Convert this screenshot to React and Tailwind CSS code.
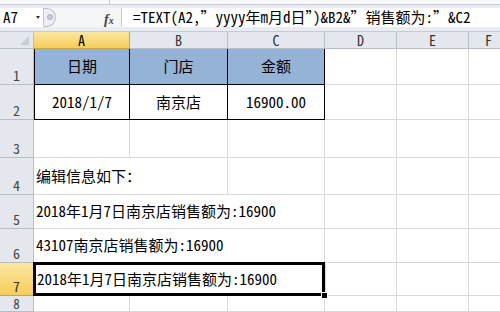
const cjk = '"Noto Sans Mono CJK SC", "Liberation Mono", "Noto Sans CJK SC", monospace'

const cols = [
  { key: 'A', w: 'w-[96px]' },
  { key: 'B', w: 'w-[98px]' },
  { key: 'C', w: 'w-[97px]' },
  { key: 'D', w: 'w-[72px]' },
  { key: 'E', w: 'w-[72px]' },
  { key: 'F', w: 'w-[40px]' },
]

function RowHead({ n, h, active, top }) {
  return (
    <div
      className={
        'w-[34px] shrink-0 flex justify-center border-r border-b leading-none ' +
        h +
        (top ? ' items-start pt-[1px] text-[13px]' : ' items-end pb-[2px] text-[14px]') +
        (active
          ? ' bg-gradient-to-b from-[#fbe7a0] to-[#f6cd57] border-[#c9a44a] text-[#333]'
          : ' bg-[#e4e8ee] border-[#b9bec6] text-[#444]')
      }
    >
      {n}
    </div>
  )
}

function Empty({ w, extra = '' }) {
  return <div className={'shrink-0 h-full border-r border-b border-[#d9d9d9] ' + w + ' ' + extra} />
}

function Line({ n, h, span, text }) {
  // text that spills over a few empty cells
  const widths = { 1: 'w-[96px]', 2: 'w-[194px]', 3: 'w-[291px]' }
  const rest = cols.slice(span)
  return (
    <div className={'flex ' + h}>
      <RowHead n={n} h="h-full" />
      <div className={'shrink-0 h-full flex items-center pl-[2px] whitespace-nowrap border-r border-b border-[#d9d9d9] text-[15px] ' + widths[span]}>
        {text}
      </div>
      {rest.map(c => <Empty key={c.key} w={c.w} />)}
    </div>
  )
}

export default function App() {
  return (
    <div className="w-[500px] h-[312px] overflow-hidden bg-white text-black" style={{ fontFamily: cjk }}>
      {/* ribbon remnant */}
      <div className="h-[5px] flex border-b border-[#c5cbd3] bg-[#f7f8fa]">
        <div className="w-[110px] border-r border-[#c5cbd3]" />
      </div>

      {/* formula bar */}
      <div className="h-[26px] bg-[#e9edf2] flex items-center pt-[2px] pb-[4px]">
        <div className="h-[19px] w-[44px] bg-white flex items-center pl-[3px] text-[15px] relative border-r border-[#c5cbd3]">
          A7
          <span className="absolute left-[36px] top-[8px] w-0 h-0 border-l-[2px] border-r-[2px] border-t-[3px] border-l-transparent border-r-transparent border-t-[#333]" />
        </div>
        <div className="h-[19px] w-[77px] bg-[#f4f6f8] flex items-center relative">
          <div className="w-[12px] h-[19px] rounded-r-full border border-l-0 border-[#b8bec6] bg-[#eceff3] flex items-center justify-center">
            <span className="w-[6px] h-[6px] rounded-full bg-[#c9ced5] border border-[#aab0b8]" />
          </div>
          <span
            className="absolute left-[60px] top-[1px] text-[14px] italic font-bold text-[#444]"
            style={{ fontFamily: '"Liberation Serif", serif' }}
          >
            f<span className="text-[10px]">x</span>
          </span>
        </div>
        <div className="h-[19px] flex-1 bg-white border-l border-[#c5cbd3] flex items-center pl-[11px] text-[15px] whitespace-nowrap">
          =TEXT(A2,”yyyy年m月d日”)&amp;B2&amp;”销售额为:”&amp;C2
        </div>
      </div>

      {/* column headers */}
      <div className="h-[18px] flex border-t border-[#c5cbd3]">
        <div className="w-[34px] shrink-0 bg-[#e4e8ee] border-r border-b border-[#b9bec6] relative">
          <span className="absolute right-[4px] bottom-[3px] w-0 h-0 border-b-[9px] border-l-[9px] border-l-transparent border-b-[#c8cdd4]" />
        </div>
        {cols.map(c => (
          <div
            key={c.key}
            className={
              'shrink-0 flex items-center justify-center border-r border-b text-[14px] ' +
              c.w +
              (c.key === 'A'
                ? ' bg-gradient-to-b from-[#fbe7a0] to-[#f6cd57] border-[#c9a44a]'
                : ' bg-[#e4e8ee] border-[#b9bec6] text-[#333]')
            }
          >
            {c.key}
          </div>
        ))}
      </div>

      {/* row 1 */}
      <div className="flex h-[36px]">
        <RowHead n="1" h="h-full" />
        {['日期', '门店', '金额'].map((t, i) => (
          <div
            key={t}
            className={'shrink-0 h-full bg-[#95b3d7] border-r border-b border-black flex items-center justify-center text-[15px] ' + cols[i].w + (i === 0 ? ' border-l border-l-black' : '')}
          >
            {t}
          </div>
        ))}
        {cols.slice(3).map(c => <Empty key={c.key} w={c.w} />)}
      </div>

      {/* row 2 */}
      <div className="flex h-[35px]">
        <RowHead n="2" h="h-full" />
        {['2018/1/7', '南京店', '16900.00'].map((t, i) => (
          <div
            key={t}
            className={'shrink-0 h-full border-r border-b border-black flex items-center justify-center text-[15px] ' + cols[i].w + (i === 0 ? ' border-l border-l-black' : '')}
          >
            {t}
          </div>
        ))}
        {cols.slice(3).map(c => <Empty key={c.key} w={c.w} />)}
      </div>

      {/* row 3 */}
      <div className="flex h-[38px]">
        <RowHead n="3" h="h-full" />
        {cols.map(c => <Empty key={c.key} w={c.w} />)}
      </div>

      <Line n="4" h="h-[37px]" span={2} text="编辑信息如下：" />
      <Line n="5" h="h-[34px]" span={3} text="2018年1月7日南京店销售额为:16900" />
      <Line n="6" h="h-[34px]" span={3} text="43107南京店销售额为:16900" />

      {/* row 7, merged A7:C7, selected */}
      <div className="flex h-[33px]">
        <RowHead n="7" h="h-full" active />
        <div className="shrink-0 w-[291px] h-full relative border-b border-[#d9d9d9]">
          <div className="absolute -left-[1px] -top-[1px] right-0 -bottom-[1px] border-[3px] border-black flex items-center pl-[1px] text-[15px] whitespace-nowrap">
            2018年1月7日南京店销售额为:16900
          </div>
          <span className="absolute -right-[3px] -bottom-[4px] w-[7px] h-[7px] bg-black border border-white" />
        </div>
        {cols.slice(3).map(c => <Empty key={c.key} w={c.w} extra={c.key === 'D' ? 'border-l border-l-[#d9d9d9]' : ''} />)}
      </div>

      {/* row 8 */}
      <div className="flex h-[16px]">
        <RowHead n="8" h="h-full" top />
        {cols.map(c => <Empty key={c.key} w={c.w} />)}
      </div>
    </div>
  )
}
